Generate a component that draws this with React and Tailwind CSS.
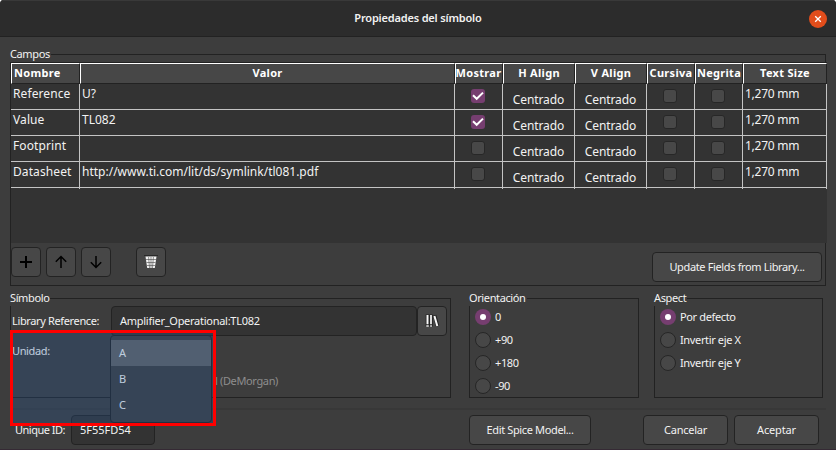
const COLS = 'grid grid-cols-[69px_375px_48px_72px_72px_48px_48px_84px]';

const HEADERS = [
  ['Nombre', 'mr-auto pl-[2px]'],
  ['Valor', ''],
  ['Mostrar', '-ml-px'],
  ['H Align', ''],
  ['V Align', ''],
  ['Cursiva', ''],
  ['Negrita', ''],
  ['Text Size', ''],
];

const ROWS = [
  { name: 'Reference', value: 'U?', show: true },
  { name: 'Value', value: 'TL082', show: true },
  { name: 'Footprint', value: '', show: false },
  { name: 'Datasheet', value: 'http://www.ti.com/lit/ds/symlink/tl081.pdf', show: false },
];

function Check({ on }) {
  return on ? (
    <span className="flex size-[14px] items-center justify-center rounded-[3px] bg-[#763e70]">
      <svg width="14" height="14" viewBox="0 0 14 14" fill="none" stroke="#fff" strokeWidth="2">
        <path d="M2 6.3 5.7 9.8 12 3.6" />
      </svg>
    </span>
  ) : (
    <span className="size-[14px] rounded-[3px] border border-[#272727] bg-[#484848]" />
  );
}

function Cell({ className = '', children }) {
  return <div className={`h-[26px] border-r border-b border-[#c4c4c4] ${className}`}>{children}</div>;
}

function Group({ title, className, children }) {
  return (
    <section className={`relative border border-[#222222] ${className}`}>
      <h2 className="absolute -left-px -top-[9px] h-[16px] whitespace-nowrap bg-[#3d3d3d] pr-px text-[11px] leading-[16px] tracking-[-0.38px]">{title}</h2>
      {children}
    </section>
  );
}

function Button({ className = '', children }) {
  return (
    <button className={`flex h-[30px] shrink-0 items-center justify-center whitespace-nowrap rounded-[4px] border border-[#232323] bg-[#474747] ${className}`}>
      {children}
    </button>
  );
}

function Radio({ on, children }) {
  return (
    <label className="flex h-[23px] items-center gap-[4px]">
      <span className={`flex size-[16px] items-center justify-center rounded-full ${on ? 'bg-[#763e70]' : 'border border-[#262626] bg-[#474747]'}`}>
        {on && <span className="size-[6px] rounded-full bg-white" />}
      </span>
      {children}
    </label>
  );
}

export default function App() {
  return (
    <div className="relative flex h-[450px] w-[836px] flex-col overflow-hidden rounded-t-[4px] border-b border-[#352a34] bg-[#3d3d3d] font-['Noto_Sans',sans-serif] text-[11px] leading-[16px] tracking-[-0.36px] text-[#f2f2f2]">
      <header className="grid h-[37px] shrink-0 grid-cols-[1fr_auto_1fr] items-center border-t border-b border-t-[#393939] border-b-[#222] bg-[#2c2c2c]">
        <span />
        <h1 className="-mt-[2px] text-[11px] font-semibold tracking-[-0.18px]">Propiedades del símbolo</h1>
        <button className="mr-[9px] flex size-[18px] items-center justify-center justify-self-end rounded-full bg-[#e24d1b]">
          <svg width="8" height="8" viewBox="0 0 8 8" stroke="#fff" strokeWidth="1.3">
            <path d="M1.2 1.2 6.8 6.8M6.8 1.2 1.2 6.8" />
          </svg>
        </button>
      </header>

      <Group title="Campos" className="ml-[10px] mt-[17px] h-[232px] w-[816px]">
        <div className="mt-[7px] h-[181px] w-[816px] border-t border-[#222] bg-[#333333]">
          <div className={COLS}>
            {HEADERS.map(([label, cls]) => (
              <div key={label} className="flex h-[21px] items-center justify-center overflow-hidden whitespace-nowrap border-t border-r border-b border-l border-t-white border-r-[#222] border-b-[#222] border-l-white bg-[#474747] pb-[2px] text-[11px] font-bold tracking-[0.3px] text-white">
                <span className={cls}>{label}</span>
              </div>
            ))}
          </div>
          <div className="relative">
            {ROWS.map((r) => (
              <div key={r.name} className={`${COLS} text-[12px] tracking-normal`}>
                <Cell className="pl-[2px] pt-[2px] tracking-[0.1px]">{r.name}</Cell>
                <Cell className="pl-[2px] pt-[2px]">{r.value}</Cell>
                <Cell className="flex justify-center pr-[2px] pt-[5px]"><Check on={r.show} /></Cell>
                <Cell className="pt-[8px] text-center tracking-[-0.1px]">Centrado</Cell>
                <Cell className="pt-[8px] text-center tracking-[-0.1px]">Centrado</Cell>
                <Cell className="flex justify-center pr-[2px] pt-[5px]"><Check /></Cell>
                <Cell className="flex justify-center pr-[2px] pt-[5px]"><Check /></Cell>
                <Cell className="pl-[2px] pt-[2px] tracking-[-0.25px]">1,270 mm</Cell>
              </div>
            ))}
          </div>
          <div className={`${COLS} h-px`}>
            {HEADERS.map(([label]) => (
              <div key={label} className="h-px border-r border-[#c4c4c4]" />
            ))}
          </div>
        </div>
        <div className="flex pt-[4px]">
          <Button className="w-[30px]">
            <svg width="14" height="14" viewBox="0 0 14 14" stroke="#000" strokeWidth="2"><path d="M7 1v12M1 7h12" /></svg>
          </Button>
          <Button className="ml-[5px] w-[30px]">
            <svg width="14" height="14" viewBox="0 0 14 14" fill="none" stroke="#000" strokeWidth="1.5"><path d="M7 13V1.5M1.8 6.7 7 1.5l5.2 5.2" /></svg>
          </Button>
          <Button className="ml-[5px] w-[30px]">
            <svg width="14" height="14" viewBox="0 0 14 14" fill="none" stroke="#000" strokeWidth="1.5"><path d="M7 1v11.5M1.8 7.3 7 12.5l5.2-5.2" /></svg>
          </Button>
          <Button className="ml-[25px] w-[30px]">
            <svg width="14" height="14" viewBox="0 0 14 14" fill="none"><path d="M0 .5h14" stroke="#2a2a2a" /><path d="M1.5 1.5h11L10.8 13H3.2z" fill="#f6f6f6" /><path d="M4.6 2 5.5 13M7 2v11M9.4 2 8.5 13M2 4.5h10M2.5 7.5h9M3 10.5h8" stroke="#474747" strokeWidth="0.6" /></svg>
          </Button>
          <Button className="ml-auto mr-[3px] mt-[5px] w-[170px]">Update Fields from Library...</Button>
        </div>
      </Group>

      <div className="ml-[10px] mt-[12px] flex h-[100px] shrink-0">
        <Group title="Símbolo" className="w-[441px]">
          <div className="flex pt-[7px]">
            <span className="w-[100px] pl-px pt-[7px] whitespace-nowrap">Library Reference:</span>
            <div className="h-[30px] w-[306px] rounded-[4px] border border-[#232323] bg-[#333] pl-[8px] pt-[6px] tracking-[-0.27px]">Amplifier_Operational:TL082</div>
            <Button className="h-[29px] w-[30px]">
              <svg width="16" height="16" viewBox="0 0 16 16" fill="none">
                <path d="M3.5 1.5v12M7 1.5v12M10.6 2.2l3 10.8" stroke="#242424" strokeWidth="3.6" />
                <path d="M3.5 2v9.3M10.4 3l2.9 10" stroke="#f8f8f8" strokeWidth="2" />
                <path d="M7 2v9.3" stroke="#f8f8f8" strokeWidth="1.7" />
                <path d="M2.3 13h2.5M6.2 13h1.7" stroke="#e8e8e8" strokeWidth="1.4" />
              </svg>
            </Button>
          </div>
          <div className="pl-px pt-[7px]">Unidad:</div>
          <div className="pl-[204px] pt-[14px] text-[#8d8d8d]">l (DeMorgan)</div>
        </Group>
        <Group title="Orientación" className="ml-[18px] w-[170px] pl-[5px] pt-[6px]">
          <Radio on>0</Radio>
          <Radio>+90</Radio>
          <Radio>+180</Radio>
          <Radio>-90</Radio>
        </Group>
        <Group title="Aspect" className="ml-[15px] w-[169px] pl-[5px] pt-[6px]">
          <Radio on>Por defecto</Radio>
          <Radio>Invertir eje X</Radio>
          <Radio>Invertir eje Y</Radio>
        </Group>
      </div>

      <footer className="ml-[10px] mt-[10px] flex w-[816px] border-t-2 border-[#383838] pt-[5px]">
        <span className="w-[61px] pl-[5px] pt-[7px] whitespace-nowrap tracking-[-0.5px]">Unique ID:</span>
        <div className="h-[30px] w-[84px] rounded-[4px] border border-[#232323] bg-[#333] pl-[8px] pt-[6px] tracking-normal">5F55FD54</div>
        <Button className="ml-[314px] w-[122px]">Edit Spice Model...</Button>
        <Button className="ml-[52px] w-[85px] tracking-[-0.25px]">Cancelar</Button>
        <Button className="ml-[6px] w-[85px] tracking-[-0.15px]">Aceptar</Button>
      </footer>

      <div className="absolute left-[110px] top-[335px] h-[88px] w-[102px] rounded-[4px] border border-[#202020] bg-[#3d3d3d] pt-[4px]">
        <div className="h-[26px] bg-[#606060] pl-[8px] pt-[5px]">A</div>
        <div className="h-[26px] pl-[8px] pt-[5px]">B</div>
        <div className="h-[26px] pl-[8px] pt-[5px]">C</div>
      </div>
      <div className="absolute left-[10px] top-[330px] h-[96px] w-[206px] border-[3px] border-[#ff0000] bg-[rgba(37,93,165,0.25)]" />
    </div>
  );
}
